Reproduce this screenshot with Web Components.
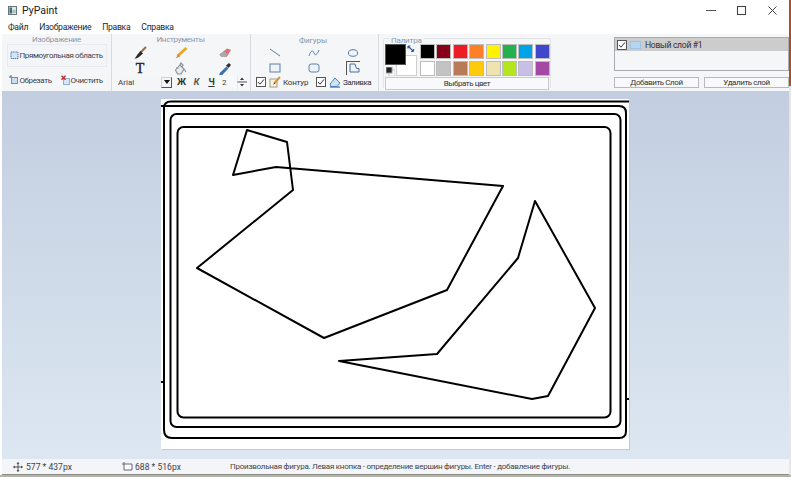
<!DOCTYPE html>
<html lang="ru">
<head>
<meta charset="utf-8">
<title>PyPaint</title>
<style>
  html, body { margin: 0; height: 100%; background: #b4b3a4; overflow: hidden; }
  body { font: 8px Roboto, "Open Sans", sans-serif; color: #3c3f46; }
</style>
</head>
<body>
<pp-window>
  <pp-titlebar>PyPaint</pp-titlebar>
  <pp-menubar></pp-menubar>
  <pp-ribbon>
    <pp-image-group></pp-image-group>
    <pp-tools-group></pp-tools-group>
    <pp-shapes-group></pp-shapes-group>
    <pp-palette></pp-palette>
    <pp-layers></pp-layers>
  </pp-ribbon>
  <pp-workspace></pp-workspace>
  <pp-statusbar>Произвольная фигура. Левая кнопка - определение вершин фигуры. Enter - добавление фигуры.</pp-statusbar>
</pp-window>

<script>
const FONT = `font-family: Roboto, "Open Sans", sans-serif; white-space: nowrap;`;

const CHECK = `<svg width="10" height="10" viewBox="0 0 10 10"><rect x=".5" y=".5" width="9" height="9" fill="#fff" stroke="#555"/><path d="M2 5l2 2.200L8 2.400" fill="none" stroke="#333" stroke-width="1"/></svg>`;

function define(name, markup) {
  customElements.define(name, class extends HTMLElement {
    constructor() {
      super();
      this.attachShadow({ mode: 'open' });
      this.shadowRoot.innerHTML = markup;
    }
  });
}

define('pp-window', `
  <style>
    :host {
      display: flex;
      flex-direction: column;
      box-sizing: border-box;
      width: 791px;
      height: 475px;
      padding: 0 2px 1px 2px;
      background:
        linear-gradient(#a9502a 0 86px, #e4e6e8 86px) right top / 2px 100% no-repeat,
        linear-gradient(#fff, #fff) left top / 2px 100% no-repeat,
        #8d8d88;
    }
  </style>
  <slot></slot>
`);

define('pp-titlebar', `
  <style>
    :host {
      display: flex;
      align-items: center;
      height: 20px;
      background: #fff;
      color: #222;
      font-size: 10.500px;
      ${FONT}
    }
    .icon { margin: 0 5px 0 6px; display: block; }
    .title { flex: 1; }
    .ctl { display: flex; padding-right: 8px; }
    .ctl svg { display: block; margin-left: 15px; }
  </style>
  <svg class="icon" width="9" height="9" viewBox="0 0 9 9">
    <rect x=".5" y=".5" width="8" height="8" fill="#dfe4e4" stroke="#6d7478"/>
    <rect x="1.500" y="1.500" width="2.500" height="6" fill="#3d6f7a"/>
    <rect x="4.500" y="4" width="3" height="3" fill="#9fc2b4"/>
  </svg>
  <span class="title"><slot></slot></span>
  <div class="ctl">
    <svg width="16" height="11" viewBox="0 0 16 11"><path d="M3 5.500h10" stroke="#555" stroke-width="1"/></svg>
    <svg width="16" height="11" viewBox="0 0 16 11"><rect x="3.500" y="1.500" width="8" height="8" fill="none" stroke="#444" stroke-width="1.100"/></svg>
    <svg width="16" height="11" viewBox="0 0 16 11"><path d="M3.500 1.500l8 8M11.500 1.500l-8 8" stroke="#444" stroke-width="1"/></svg>
  </div>
`);

define('pp-menubar', `
  <style>
    :host {
      display: flex;
      align-items: center;
      gap: 11px;
      height: 14px;
      padding: 0 0 0 6px;
      background: #fff;
      color: #23262e;
      font-size: 8.600px;
      letter-spacing: -.28px;
      ${FONT}
    }
  </style>
  <span>Файл</span><span>Изображение</span><span>Правка</span><span>Справка</span>
`);

define('pp-ribbon', `
  <style>
    :host {
      display: flex;
      height: 57px;
      background: #f5f6f8;
    }
  </style>
  <slot></slot>
`);

define('pp-image-group', `
  <style>
    :host {
      display: flex;
      flex-direction: column;
      align-items: center;
      box-sizing: border-box;
      width: 110px;
      border-right: 1px solid #d7dade;
      color: #3c3f46;
      font-size: 8px;
      letter-spacing: -.38px;
      ${FONT}
    }
    .label { height: 10px; line-height: 11px; color: #8a96a6; letter-spacing: -.2px; }
    .big {
      box-sizing: border-box;
      display: flex;
      align-items: center;
      gap: 1px;
      width: 100px;
      height: 23px;
      padding-left: 2px;
      background: #f3f5f8;
      border: 1px solid #e7eaef;
    }
    .row { display: flex; margin-top: 8px; width: 100px; align-items: center; padding-left: 2px; box-sizing: border-box; }
    .item { display: flex; align-items: center; gap: 1px; }
    .item:first-child { width: 52px; }
    svg { display: block; flex: none; }
  </style>
  <span class="label">Изображение</span>
  <div class="big">
    <svg width="9" height="9" viewBox="0 0 9 9"><rect x="1" y="1" width="7" height="6.500" fill="#d5e6f7" stroke="#4a78ad" stroke-dasharray="1.500 .7"/></svg>
    <span>Прямоугольная область</span>
  </div>
  <div class="row">
    <div class="item">
      <svg width="10" height="10" viewBox="0 0 10 10"><rect x="2.500" y="2.500" width="6" height="6" fill="#c9def3" stroke="#6b8fb8"/><path d="M0 2h2M2 0v2" stroke="#555"/></svg>
      <span>Обрезать</span>
    </div>
    <div class="item">
      <svg width="9" height="10" viewBox="0 0 9 10"><rect x="2.500" y="3.500" width="6" height="6" fill="#d5e6f7" stroke="#8fb0d2"/><path d="M.5.8l4 4M4.500.8l-4 4" stroke="#c22c2c" stroke-width="1.500"/></svg>
      <span>Очистить</span>
    </div>
  </div>
`);

define('pp-tools-group', `
  <style>
    :host {
      display: block;
      box-sizing: border-box;
      width: 139px;
      border-right: 1px solid #d7dade;
      color: #3c3f46;
      font-size: 8px;
      ${FONT}
    }
    .label { display: block; height: 11px; line-height: 12px; text-align: center; color: #8a96a6; padding-right: 1px; letter-spacing: -.3px; }
    .grid {
      display: grid;
      grid-template-columns: 41px 44px 14px;
      grid-auto-rows: 16px;
      padding-left: 21px;
      justify-items: start;
      align-items: center;
      height: 30px;
    }
    .t { width: 14px; text-align: center; font: 14px/14px "Liberation Serif", serif; color: #222; -webkit-text-stroke: .4px #222; }
    .opts { display: flex; align-items: center; height: 14px; padding-left: 5px; }
    .combo {
      box-sizing: border-box;
      display: flex; align-items: center; justify-content: space-between;
      width: 55px; height: 13px; background: #f3f5f7; padding-left: 1px;
    }
    .combo i { display: flex; align-items: center; justify-content: center; width: 11px; height: 11px; border: 1px solid #d3d3d3; border-bottom: 1px solid #555; border-right: 1px solid #555; background: #f4f4f4; box-sizing: border-box; }
    .combo i::after { content: ""; border: 3px solid transparent; border-top: 4px solid #111; border-bottom: 0; }
    .b { width: 15px; text-align: center; font-size: 9px; font-weight: 700; color: #333; }
    .bold { margin-left: 2px; }
    .it { font-style: italic; color: #555; }
    .un { text-decoration: underline; }
    .spin {
      box-sizing: border-box;
      display: flex; align-items: center; justify-content: space-between;
      width: 28px; height: 14px; padding-left: 3px; background: #f7f8fa;
    }
    .spin svg { display: block; }
  </style>
  <span class="label">Инструменты</span>
  <div class="grid">
    <svg width="14" height="14" viewBox="0 0 14 14"><path d="M13 1L7 7" stroke="#9a6a3c" stroke-width="2"/><path d="M7.500 5L10 7.500 6 11C4 12.500 2 12.800 1.500 12.500 3 11.500 3.500 9 7.500 5Z" fill="#2a2a2a"/></svg>
    <svg width="14" height="14" viewBox="0 0 14 14"><path d="M12.500 2L3.500 10" stroke="#e9a925" stroke-width="3"/><path d="M4.500 8.200L5.800 10.400 1.500 12.500Z" fill="#d87a4a"/></svg>
    <svg width="14" height="14" viewBox="0 0 14 14"><path d="M9 2.500l4 1.200-4 7-5.500.3-2-2.500Z" fill="#e0707a"/><path d="M5.800 5.200L9.500 8 8 10.800l-4.500.2-2-2.400Z" fill="#a9a9ae"/></svg>
    <span class="t">T</span>
    <svg width="14" height="14" viewBox="0 0 14 14"><path d="M1.500 8l4.500-5 4 4-3 5H3.500Z" fill="#e9ebee" stroke="#8a8d92" stroke-width="1.100"/><path d="M6 3l1-2 2 2-1 2M10 7l2 3" stroke="#8a8d92" fill="none" stroke-width="1.100"/><rect x="2" y="5" width="2.500" height="2" fill="#9ab"/></svg>
    <svg width="14" height="14" viewBox="0 0 14 14"><path d="M9 5L2.500 11.500 2 13l1.500-.5L9.800 6" stroke="#3b6fb0" stroke-width="1.600" fill="none"/><path d="M8 3.500l3-2.500 2 2-2.500 3Z" fill="#2b2f36"/></svg>
  </div>
  <div class="opts">
    <div class="combo"><span>Arial</span><i></i></div>
    <span class="b bold">Ж</span>
    <span class="b it">К</span>
    <span class="b un">Ч</span>
    <div class="spin"><span>2</span>
      <svg width="10" height="14" viewBox="0 0 10 14"><path d="M0 7h10" stroke="#555"/><path d="M5 2.500L3 5h4Z M5 11.500L3 9h4Z" fill="#333"/><path d="M0 0v14" stroke="#ddd"/></svg>
    </div>
  </div>
`);

define('pp-shapes-group', `
  <style>
    :host {
      display: block;
      box-sizing: border-box;
      width: 128px;
      border-right: 1px solid #d7dade;
      color: #30333a;
      font-size: 8px;
      letter-spacing: -.2px;
      ${FONT}
    }
    .label { display: block; height: 11px; line-height: 14px; text-align: center; color: #8a96a6; padding-right: 3px; letter-spacing: -.1px; }
    .grid {
      display: grid;
      grid-template-columns: 16px 16px 16px;
      grid-auto-rows: 15px;
      column-gap: 23px;
      padding-left: 16px;
      place-items: center;
      height: 30px;
    }
    .sel { box-sizing: border-box; width: 14px; height: 14px; border-top: 1px solid #555; border-left: 1px solid #555; display: block; }
    .opts { display: flex; align-items: center; height: 14px; padding-left: 5px; }
    .opts svg { display: block; flex: none; }
    .opts .ico { margin: 0 2px 0 3px; }
    .w { width: 33px; }
    .z { letter-spacing: -.5px; }
  </style>
  <span class="label">Фигуры</span>
  <div class="grid">
    <svg width="14" height="12" viewBox="0 0 14 12"><path d="M2 2l10 7" stroke="#5d7ea3" stroke-width="1"/></svg>
    <svg width="14" height="12" viewBox="0 0 14 12"><path d="M2 9C4 3 6 3 7 6s3 2 5-3" fill="none" stroke="#5d7ea3" stroke-width="1"/></svg>
    <svg width="14" height="12" viewBox="0 0 14 12"><ellipse cx="7" cy="6" rx="4.600" ry="3.300" fill="#eef3f9" stroke="#5d7ea3"/></svg>
    <svg width="14" height="12" viewBox="0 0 14 12"><rect x="2" y="2" width="10" height="8" fill="#eef3f9" stroke="#5d7ea3"/></svg>
    <svg width="14" height="12" viewBox="0 0 14 12"><rect x="2" y="2" width="10" height="8" rx="2.200" fill="#eef3f9" stroke="#5d7ea3"/></svg>
    <span class="sel"><svg width="13" height="13" viewBox="0 0 13 13" style="display:block"><path d="M3 2h5l1.500 4.500H12V10H3Z" fill="#eef3f9" stroke="#4a6f99"/></svg></span>
  </div>
  <div class="opts">
    ${CHECK}
    <svg class="ico" width="12" height="12" viewBox="0 0 12 12"><rect x="1" y="3" width="7" height="8" fill="#fdf6df" stroke="#9a9a8a"/><path d="M11 1L5 7.500" stroke="#e58f2d" stroke-width="2"/><path d="M5.500 6.500l-1.800 2.600 2.600-1.700Z" fill="#555"/></svg>
    <span class="w">Контур</span>
    ${CHECK}
    <svg class="ico" width="12" height="12" viewBox="0 0 12 12"><path d="M1 8l5-6 5 5-3 3.500H2Z" fill="#cfe2f6" stroke="#4d82bd"/><path d="M1 11h10" stroke="#4d82bd" stroke-width="1.400"/></svg>
    <span class="z">Заливка</span>
  </div>
`);

define('pp-swatch', `
  <style>
    :host {
      display: block;
      box-sizing: border-box;
      width: 15px;
      height: 15px;
      border: 1px solid #bdbdbd;
      background: var(--c, #fff);
    }
  </style>
`);

define('pp-palette', `
  <style>
    :host {
      display: block;
      position: relative;
      box-sizing: border-box;
      width: 229px;
      height: 57px;
      padding: 10px 0 0 6px;
      color: #3c3f46;
      font-size: 8px;
      ${FONT}
    }
    .frame {
      position: absolute; left: 4px; top: 4px; width: 168px; height: 50px;
      border: 1px solid #e2e4e8; border-bottom: 0; border-radius: 2px 2px 0 0; box-sizing: border-box;
    }
    .legend { position: absolute; left: 10px; top: 1px; padding: 0 2px; background: #f5f6f8; color: #8a96a6; line-height: 11px; letter-spacing: -.2px; }
    .top { display: flex; gap: 3px; position: relative; }
    .cur { position: relative; width: 32px; height: 32px; flex: none; }
    .fg { position: absolute; left: 0; top: 0; width: 21px; height: 21px; background: #000; border: 1px solid #555; box-sizing: border-box; z-index: 1; }
    .bg { position: absolute; left: 11px; top: 11px; width: 21px; height: 21px; background: #fff; border: 1px solid #cfcfcf; box-sizing: border-box; }
    .swap { position: absolute; left: 22px; top: 1px; }
    .def { position: absolute; left: 1px; top: 23px; }
    .sw { display: grid; grid-template-columns: repeat(8, 15px); grid-auto-rows: 15px; gap: 2px 1.400px; }
    .btn {
      box-sizing: border-box;
      width: 164px; height: 13px; margin-top: 1px;
      border: 1px solid #c9c9c9; background: #f8f9fa;
      text-align: center; line-height: 11px; color: #333; letter-spacing: -.45px;
    }
  </style>
  <div class="frame"></div>
  <span class="legend">Палитра</span>
  <div class="top">
    <div class="cur">
      <div class="bg"></div>
      <div class="fg"></div>
      <svg class="swap" width="8" height="8" viewBox="0 0 8 8"><path d="M1 1l5.500 5.500M1 1h2.400M1 1v2.400M6.500 6.500h-2.400M6.500 6.500V4" fill="none" stroke="#2d5f9e" stroke-width="1.200"/></svg>
      <svg class="def" width="9" height="9" viewBox="0 0 9 9"><rect x="3" y="3" width="6" height="6" fill="#fff" stroke="#ccc"/><rect x="0" y="0" width="6" height="6" fill="#222" stroke="#999"/></svg>
    </div>
    <div class="sw">
      <pp-swatch style="--c:#000"></pp-swatch><pp-swatch style="--c:#880015"></pp-swatch>
      <pp-swatch style="--c:#ed1c24"></pp-swatch><pp-swatch style="--c:#ff7f27"></pp-swatch>
      <pp-swatch style="--c:#fff200"></pp-swatch><pp-swatch style="--c:#22b14c"></pp-swatch>
      <pp-swatch style="--c:#00a2e8"></pp-swatch><pp-swatch style="--c:#3f48cc"></pp-swatch>
      <pp-swatch style="--c:#fff"></pp-swatch><pp-swatch style="--c:#c3c3c3"></pp-swatch>
      <pp-swatch style="--c:#b97a57"></pp-swatch><pp-swatch style="--c:#ffc90e"></pp-swatch>
      <pp-swatch style="--c:#efe4b0"></pp-swatch><pp-swatch style="--c:#b5e61d"></pp-swatch>
      <pp-swatch style="--c:#c8bfe7"></pp-swatch><pp-swatch style="--c:#a349a4"></pp-swatch>
    </div>
  </div>
  <div class="btn">Выбрать цвет</div>
`);

define('pp-layers', `
  <style>
    :host {
      display: flex;
      flex-direction: column;
      box-sizing: border-box;
      width: 181px;
      padding: 3px 0 0 6px;
      color: #333;
      font-size: 8.600px;
      ${FONT}
    }
    .list { box-sizing: border-box; width: 175px; height: 34px; border: 1px solid #a8abb0; background: #f5f6f8; }
    .row { display: flex; align-items: center; height: 13px; background: #cccccc; padding-left: 2px; color: #2d3140; letter-spacing: -.3px; }
    .row svg { display: block; flex: none; }
    .thumb { box-sizing: border-box; width: 11px; height: 8px; margin: 0 4px 0 3px; background: #b5d6f2; border: 1px solid #9cc2e4; }
    .btns { display: flex; gap: 5px; margin-top: 6px; }
    .btn { box-sizing: border-box; width: 85px; height: 11px; border: 1px solid #b9b9b9; background: #f8f9fa; text-align: center; line-height: 10px; font-size: 8px; letter-spacing: -.42px; }
  </style>
  <div class="list">
    <div class="row">${CHECK}<span class="thumb"></span><span>Новый слой #1</span></div>
  </div>
  <div class="btns"><div class="btn">Добавить Слой</div><div class="btn">Удалить слой</div></div>
`);

define('pp-workspace', `
  <style>
    :host {
      display: block;
      flex: 1;
      min-height: 0;
      box-sizing: border-box;
      padding: 8px 0 0 159px;
      background: linear-gradient(#c2cee0, #dde7f2);
    }
    svg { display: block; background: #fff; box-shadow: 1px 1px 0 #c6c9cc; }
  </style>
  <svg width="468" height="350" viewBox="161 99 468 350" fill="none" stroke="#000" stroke-width="2" stroke-linejoin="round">
    <path d="M161 106H619Q626 106 626 113V431Q626 438 619 438H172Q164 438 164 430V108Q164 101.500 171 101.500H629" />
    <path d="M161 382H164M626 399H629" />
    <rect x="170.500" y="114" width="450" height="313" rx="6" />
    <rect x="177.500" y="127" width="433" height="290.500" rx="6" />
    <path d="M247 130L287 142 293 190 197 268 324 338 447 290 503 186 276 167 233 175Z" />
    <path d="M535 201L595 308 548 396 532 399 339 361 437 354 518 258Z" />
  </svg>
`);

define('pp-statusbar', `
  <style>
    :host {
      display: flex;
      align-items: center;
      height: 15px;
      flex: none;
      background: #f3f5f8;
      color: #3f4248;
      font-size: 8px;
      ${FONT}
    }
    svg { display: block; flex: none; }
    .a { margin-left: 11px; }
    .pos { width: 96px; margin-left: 3px; font-size: 8.600px; }
    .size { width: 95px; margin-left: 2px; font-size: 8.600px; }
    .msg { letter-spacing: -.25px; }
  </style>
  <svg class="a" width="10" height="10" viewBox="0 0 10 10"><path d="M5 .5v9M.5 5h9" stroke="#555"/><path d="M5 0L3.500 2h3ZM5 10L3.500 8h3ZM0 5L2 3.500v3ZM10 5L8 3.500v3Z" fill="#555"/></svg>
  <span class="pos">577 * 437px</span>
  <svg width="11" height="10" viewBox="0 0 11 10"><path d="M2 0v2H0M2 2v6h8V2H2Z" fill="#fff" stroke="#667"/></svg>
  <span class="size">688 * 516px</span>
  <span class="msg"><slot></slot></span>
`);
</script>
</body>
</html>
